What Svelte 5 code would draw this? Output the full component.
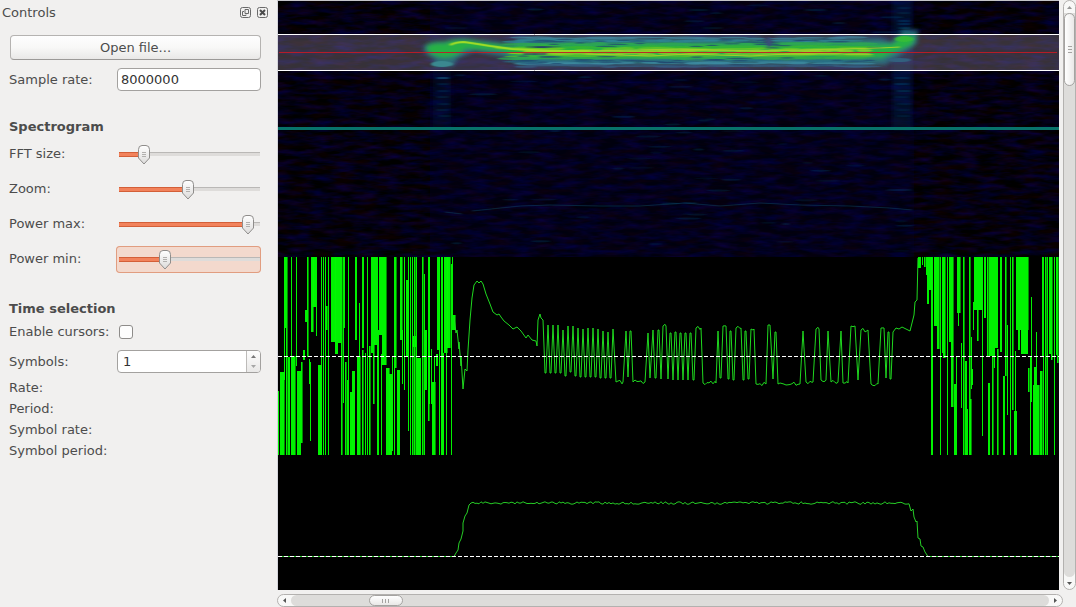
<script lang="ts">
  type Slider = { id: string; label: string; value: number; focused?: boolean };

  let sampleRate = $state('8000000');
  let symbols = $state(1);
  let cursors = $state(false);
  let sliders: Slider[] = $state([
    { id: 'fft', label: 'FFT size:', value: 15 },
    { id: 'zoom', label: 'Zoom:', value: 49 },
    { id: 'pmax', label: 'Power max:', value: 95 },
    { id: 'pmin', label: 'Power min:', value: 31, focused: true },
  ]);
  const readouts = ['Rate:', 'Period:', 'Symbol rate:', 'Symbol period:'];

  // small seeded generator, keeps the traces stable between renders
  function rng(seed: number) {
    return () => {
      seed = (seed * 1664525 + 1013904223) >>> 0;
      return seed / 4294967296;
    };
  }

  // clipped demodulator noise: x, width, top, bottom
  const TOP = 257, END = 455;
  const noise = [
    [278, 1, 391, END], [280, 4, 372, END], [284, 2, TOP, 328], [284, 1, 328, 380], [286, 1, TOP, END],
    [288, 2, 357, END], [291, 1, TOP, END], [292, 3, 356, END], [296, 1, TOP, 366], [297, 4, 371, END],
    [301, 1, 362, 443], [303, 2, 350, 360], [305, 2, 310, 322], [307, 1, TOP, 357], [309, 1, 359, 384],
    [310, 1, 362, 441], [311, 2, TOP, 332], [313, 4, TOP, 307], [316, 1, 300, 336], [318, 3, 365, END],
    [321, 1, TOP, END], [323, 1, TOP, END], [325, 2, 306, 330], [325, 1, TOP, END], [328, 1, TOP, END],
    [331, 4, TOP, 342], [335, 3, TOP, 354], [338, 3, TOP, 343], [341, 1, TOP, END], [343, 1, TOP, 403],
    [344, 1, TOP, 328], [345, 1, 362, END], [347, 2, 380, END], [348, 1, TOP, 407], [350, 2, 392, END],
    [352, 3, 371, END], [355, 2, TOP, 340], [357, 3, 356, END], [359, 1, 303, END], [362, 2, TOP, 348],
    [362, 1, 350, END], [365, 1, 353, END], [367, 1, TOP, END], [369, 1, 346, END], [371, 3, TOP, 353],
    [374, 3, TOP, 345], [373, 1, 340, 404], [377, 1, TOP, END], [379, 3, TOP, 335], [382, 4, TOP, 365],
    [378, 1, 330, END], [381, 1, 354, END], [386, 3, 368, END], [389, 3, 374, END], [392, 1, 357, 451],
    [394, 2, TOP, 368], [394, 1, TOP, END], [397, 3, 370, END], [400, 2, TOP, 340], [402, 1, 330, 384],
    [404, 1, TOP, 390], [406, 2, 280, 357], [408, 1, TOP, 431], [410, 1, TOP, END], [412, 1, 344, END],
    [413, 3, 336, 347], [412, 1, TOP, 344], [414, 1, TOP, END], [416, 1, TOP, END], [417, 4, 358, END],
    [422, 1, TOP, END], [424, 1, 274, END], [425, 2, 330, 390], [428, 1, TOP, 421], [429, 1, TOP, 404],
    [431, 1, 349, 404], [432, 3, 382, END], [434, 1, 357, END], [436, 2, 354, 366], [437, 2, TOP, 350],
    [439, 1, TOP, END], [441, 2, TOP, END], [444, 3, TOP, 353], [443, 1, 353, END], [446, 1, TOP, END],
    [447, 3, TOP, 348], [451, 1, 264, END], [452, 1, TOP, 330], [453, 2, 315, 330],
    [918, 3, TOP, 268], [922, 1, TOP, 265], [924, 1, TOP, 267], [926, 1, TOP, 275], [927, 2, TOP, 304],
    [929, 2, TOP, 290], [931, 2, TOP, END], [934, 3, TOP, 326], [937, 2, TOP, 349], [940, 1, TOP, END],
    [942, 2, TOP, 353], [943, 2, TOP, 358], [947, 1, TOP, END], [949, 2, TOP, 342], [951, 2, TOP, 407],
    [954, 3, 384, END], [956, 1, 356, 385], [957, 3, TOP, 313], [958, 1, 300, 326], [961, 1, 343, 408],
    [963, 1, TOP, END], [965, 2, 361, END], [966, 2, 409, END], [969, 1, TOP, END], [971, 1, 337, 389],
    [972, 1, 369, 385], [970, 1, 399, END], [973, 1, 302, 330], [974, 8, TOP, 310], [977, 1, 310, 341],
    [982, 1, TOP, 436], [984, 2, TOP, 318], [987, 1, TOP, 357], [988, 2, 383, END], [989, 6, TOP, 356],
    [992, 1, 357, END], [994, 1, 350, 368], [995, 3, TOP, 348], [997, 1, 349, END], [1000, 2, TOP, 352],
    [1003, 2, 376, END], [1005, 1, TOP, 376], [1007, 1, 325, 415], [1010, 1, TOP, END], [1012, 1, TOP, 410],
    [1014, 3, 411, END], [1015, 1, 351, END], [1016, 12, TOP, 330], [1018, 2, TOP, 350], [1021, 7, TOP, 354],
    [1028, 1, 368, 392], [1030, 1, 357, END], [1031, 1, 297, 402], [1033, 6, 385, END], [1034, 2, 367, 386],
    [1036, 1, 332, END], [1040, 2, 371, END], [1042, 2, TOP, 357], [1043, 1, TOP, END], [1045, 1, TOP, END],
    [1047, 1, TOP, END], [1049, 2, TOP, 354], [1051, 1, TOP, 360], [1054, 1, TOP, END], [1056, 1, TOP, 355],
    [1057, 1, TOP, 363],
  ];

  // symbol levels of the burst: from x, to x, y
  const levels = [
    [545, 546, 373], [548, 548, 325], [550, 551, 373], [553, 553, 325], [555, 556, 373], [558, 558, 325],
    [560, 561, 373], [563, 563, 330], [565, 566, 376], [568, 568, 326], [570, 571, 372], [573, 573, 326],
    [575, 576, 376], [578, 578, 328], [580, 581, 377], [583, 583, 329], [585, 586, 377], [588, 588, 328],
    [590, 591, 377], [593, 593, 328], [595, 596, 377], [598, 598, 329], [600, 601, 378], [603, 603, 331],
    [605, 606, 378], [608, 608, 332], [610, 611, 378], [613, 613, 329], [616, 623, 382], [626, 626, 331],
    [628, 628, 377], [630, 631, 331], [633, 645, 382], [648, 648, 333], [650, 650, 378], [653, 653, 330],
    [655, 656, 378], [658, 659, 330], [661, 661, 379], [663, 666, 326], [668, 668, 379], [670, 671, 333],
    [673, 673, 380], [675, 676, 332], [678, 678, 380], [680, 681, 333], [683, 683, 380], [685, 686, 333],
    [688, 688, 380], [690, 691, 333], [693, 694, 380], [696, 701, 328], [703, 716, 383], [718, 718, 331],
    [720, 721, 378], [723, 726, 326], [728, 729, 379], [730, 731, 331], [733, 734, 380], [736, 741, 328],
    [743, 744, 380], [745, 746, 331], [748, 749, 379], [751, 754, 329], [756, 766, 384], [768, 770, 325],
    [773, 773, 379], [775, 776, 332], [778, 800, 384], [803, 803, 331], [806, 813, 382], [816, 819, 329],
    [821, 826, 380], [828, 828, 331], [831, 838, 382], [841, 841, 331], [843, 848, 383], [851, 855, 326],
    [858, 858, 380], [861, 868, 330], [871, 878, 384], [881, 884, 328], [886, 886, 378], [888, 889, 332],
    [890, 891, 379],
  ];

  function burst() {
    const r = rng(9);
    let d = 'M454 317L456 333L457 330L459 349L459 342L461 366L461 356L463 389L465 369L467 371L468 350L470 320L472 298' +
      'L474 285L477 281L479 283L481 281L483 284L486 294L490 304L493 312L497 315L499 314L501 317L504 321L509 325' +
      'L513 329L517 327L521 331L526 338L528 335L532 340L536 341L537 346L538 320L540 314L541 318L543 320';
    for (const [a, b, y] of levels) {
      d += `L${a} ${y}`;
      for (let x = a + 2; x < b; x += 2) d += `L${x} ${(y + (r() - 0.5) * 4).toFixed(1)}`;
      if (b > a) d += `L${b} ${y}`;
    }
    return d + 'L893 332L896 328L899 329L902 327L906 329L910 331L911 327L914 315L915 302L917 300L918 258';
  }

  function envelope() {
    const r = rng(4);
    let d = 'M278 556.5H454L456 553L458 550L459 543L461 539L463 531L463 523L465 516L467 513L469 505L471 503';
    for (let x = 473; x < 910; x += 2) d += `L${x} ${(503 + (r() - 0.5) * 2.6).toFixed(1)}`;
    return d + 'L911 511L913 509L914 517L916 522L917 521L918 538L920 539L921 546L923 547L925 552L928 556.5H1059';
  }

  // horizontal energy streaks inside the tuned band
  const streaks = (() => {
    const r = rng(21);
    const out = [];
    const rows = [
      [38, '#40819a'], [41, '#2f8795'], [44, '#2daa50'], [47, '#36b632'], [49, '#6cc826'], [51, '#9ad428'],
      [54, '#92d028'], [56, '#50be2c'], [58, '#2fac4a'], [61, '#2a6f86'], [63, '#3c8aa0'], [66, '#345d83'],
    ] as [number, string][];
    for (const [y, color] of rows) {
      for (let x = 518 + r() * 14; x < 868; x += 8 + r() * 24) {
        out.push({ x, y: y + (r() - 0.5) * 1.6, rx: 8 + r() * 16, ry: 0.7 + r() * 0.9, color });
      }
    }
    for (let i = 0; i < 60; i++) {
      out.push({ x: 515 + r() * 360, y: i % 2 ? 39 + r() * 9 : 56 + r() * 9, rx: 4 + r() * 11, ry: 0.6, color: '#204a70' });
    }
    for (let i = 0; i < 8; i++) {
      out.push({ x: 518 + r() * 28, y: i % 2 ? 47 : 54, rx: 7, ry: 0.6, color: '#28406a' });
    }
    return out;
  })();

  // faint echoes above and below the band
  const echoes = (() => {
    const r = rng(77);
    const out = [];
    for (let i = 0; i < 75; i++) {
      out.push({ x: 435 + r() * 475, y: 4 + r() * 250, rx: 4 + r() * 10, o: 0.1 + r() * 0.2 });
    }
    for (const y of [78, 84, 91, 97, 104, 110, 116]) {
      out.push({ x: 442 + r() * 3, y, rx: 7, o: y < 80 ? 0.8 : 0.25 });
      out.push({ x: 901 + r() * 3, y, rx: 8, o: y < 92 ? 0.4 : 0.2 });
    }
    for (const y of [8, 13, 21, 24, 28, 31]) out.push({ x: 904, y, rx: 7, o: y > 20 ? 0.4 : 0.25 });
    return out;
  })();
</script>

<div class="app">
  <aside>
    <header>
      <span class="title">Controls</span>
      <button class="dock" aria-label="Float panel">
        <svg viewBox="0 0 11 11">
          <rect x=".5" y=".5" width="10" height="10" rx="2" />
          <path d="M5 2.500h3.500v4H5zM4 4.500H2.500v4H6V7.500" />
        </svg>
      </button>
      <button class="dock" aria-label="Close panel">
        <svg viewBox="0 0 11 11">
          <rect x=".5" y=".5" width="10" height="10" rx="2" />
          <path class="cross" d="M3 3l5 5M8 3l-5 5" />
        </svg>
      </button>
    </header>

    <form onsubmit={(e) => e.preventDefault()}>
      <button class="open" type="button">Open file...</button>
      <div class="row rate">
        <label for="rate">Sample rate:</label>
        <input id="rate" type="text" bind:value={sampleRate} />
      </div>

      <h2>Spectrogram</h2>
      <div class="sliders">
        {#each sliders as s (s.id)}
          <div class="row">
            <label for={s.id}>{s.label}</label>
            <div class="slider" class:focused={s.focused}>
              <input id={s.id} type="range" min="0" max="100" bind:value={s.value} style="--fill: {s.value}%" />
            </div>
          </div>
        {/each}
      </div>

      <h2>Time selection</h2>
      <div class="row check">
        <label for="cursors">Enable cursors:</label>
        <input id="cursors" type="checkbox" bind:checked={cursors} />
      </div>
      <div class="row symbols">
        <label for="symbols">Symbols:</label>
        <div class="spin">
          <input id="symbols" type="number" bind:value={symbols} />
          <div class="steps">
            <button type="button" aria-label="Increase" onclick={() => symbols++}>
              <svg viewBox="0 0 5 3"><path d="M0 3L2.500 0L5 3z" /></svg>
            </button>
            <button type="button" class="off" aria-label="Decrease" onclick={() => symbols--}>
              <svg viewBox="0 0 5 3"><path d="M0 0L2.500 3L5 0z" /></svg>
            </button>
          </div>
        </div>
      </div>
      <div class="readouts">
        {#each readouts as name}
          <span>{name}</span>
        {/each}
      </div>
    </form>
  </aside>

  <main>
    <svg class="plot" viewBox="278 1 781 589" preserveAspectRatio="none">
      <defs>
        <filter id="grain" x="0" y="0" width="100%" height="100%" color-interpolation-filters="sRGB">
          <feTurbulence type="fractalNoise" baseFrequency="0.045 0.2" numOctaves="3" seed="8" />
          <feColorMatrix values="0 .12 0 0 -.045  0 0 0 0 0  .42 0 0 0 -.145  0 0 0 0 1" />
        </filter>
        <filter id="soft" x="-20%" y="-40%" width="140%" height="180%"><feGaussianBlur stdDeviation="2" /></filter>
        <filter id="fine" x="-10%" y="-20%" width="120%" height="140%"><feGaussianBlur stdDeviation="1.4 .5" /></filter>
        <clipPath id="top"><rect x="278" y="1" width="781" height="256" /></clipPath>
      </defs>
      <rect x="278" y="1" width="781" height="589" />

      <g clip-path="url(#top)">
        <rect x="278" y="1" width="781" height="256" filter="url(#grain)" />
        <rect x="430" y="1" width="484" height="256" fill="#000048" opacity=".2" />
        <g filter="url(#soft)">
          <rect x="433" y="70" width="18" height="60" fill="#002860" opacity=".2" />
          <rect x="892" y="0" width="20" height="130" fill="#002860" opacity=".3" />
        </g>
        <g filter="url(#fine)" fill="#0c4a72">
          {#each echoes as e}
            <ellipse cx={e.x} cy={e.y} rx={e.rx} ry="1" opacity={e.o} />
          {/each}
        </g>
        <path class="echo" filter="url(#fine)" d="M445 212L462 214M472 211L520 206L550 205L600 206L640 206L685 203L720 206L760 203L800 205L850 206L890 208L912 210" />
        <rect x="278" y="35" width="781" height="35" fill="#c8b4d2" opacity=".27" />

        <g filter="url(#soft)">
          <path fill="#2c7a86" d="M423 47Q428 40 445 41Q460 36 478 40L512 44L520 38H762L769 46L776 38H880L892 42L903 30H918L917 44L908 50L896 58L885 65H520L508 58L475 51L458 58L453 66H432L436 60Q424 55 423 47z" opacity=".8" />
          <path fill="#28b244" d="M426 47Q432 42 444 43Q454 38 472 41L515 46L530 44H762L769 49L776 44H880L892 44L902 36H916L912 45L898 51L882 58H520L500 51L466 49Q454 60 439 57Q427 54 426 47z" />
        </g>
        <g filter="url(#fine)">
          {#each streaks as s}
            <ellipse cx={s.x} cy={s.y} rx={s.rx} ry={s.ry} fill={s.color} opacity=".75" />
          {/each}
          <path class="ridge" d="M450 45Q456 42 464 42Q478 44 490 46L512 49L550 51H590" />
          <path class="ridge faint" d="M590 51L680 49L760 51L880 48L900 47M586 54L650 56L690 54L750 56L790 54L870 54" />
          <ellipse cx="442" cy="64" rx="11" ry="3" fill="#3a8890" />
          <ellipse cx="899" cy="60" rx="12" ry="2" fill="#31617e" />
          <ellipse cx="904" cy="39" rx="9" ry="3" fill="#34bc38" />
          <ellipse cx="769" cy="42" rx="3" ry="5" fill="#374e78" />
        </g>
        <path class="center" d="M279 52.500H1057" />
        <path class="edge" d="M278 34.500H1059M278 70.500H1059" />
        <rect x="278" y="127" width="781" height="3" fill="#08736b" />
      </g>

      <g fill="#008a00" shape-rendering="crispEdges">
        {#each noise.filter((n, i) => i % 3 === 1) as [x, w, y1, y2]}
          <rect x={x + w} y={y1} width="1" height={y2 - y1} />
        {/each}
      </g>
      <g fill="#0f0" opacity=".95" shape-rendering="crispEdges">
        {#each noise as [x, w, y1, y2]}
          <rect {x} y={y1} width={w} height={y2 - y1} />
        {/each}
      </g>
      <path class="trace fm" d={burst()} />
      <path class="trace" d={envelope()} />
      <path class="dash" d="M278 356.500H1059M278 556.500H1059" />
    </svg>

    <div class="bar vertical">
      <button aria-label="Scroll up" class="off"><svg viewBox="0 0 5 3"><path d="M0 3L2.500 0L5 3z" /></svg></button>
      <div class="track"><div class="thumb"><i></i><i></i><i></i></div></div>
      <button aria-label="Scroll down"><svg viewBox="0 0 5 3"><path d="M0 0L2.500 3L5 0z" /></svg></button>
    </div>
    <div class="bar horizontal">
      <button aria-label="Scroll left"><svg viewBox="0 0 3 5"><path d="M3 0L0 2.500L3 5z" /></svg></button>
      <div class="track"><div class="thumb"><i></i><i></i><i></i></div></div>
      <button aria-label="Scroll right"><svg viewBox="0 0 3 5"><path d="M0 0L3 2.500L0 5z" /></svg></button>
    </div>
  </main>
</div>

<style>
  :global(body) { background: #f1f0ef; }
  .app {
    display: grid;
    grid-template-columns: 277px 1fr;
    height: 100vh;
    overflow: hidden;
    color: #4c4c4c;
    font: 13px/18px "DejaVu Sans", sans-serif;
  }
  input, button { font: inherit; color: inherit; margin: 0; padding: 0; box-sizing: border-box; }

  header { display: flex; align-items: center; gap: 6px; height: 25px; padding: 0 9px 0 2px; }
  .title { flex: 1; }
  .dock { width: 11px; height: 11px; border: 0; background: none; display: flex; }
  .dock svg { width: 11px; height: 11px; fill: none; stroke: #6a6a6a; }
  .dock .cross { stroke: #4a4a4a; stroke-width: 2; }

  form { padding: 10px 16px 0 9px; }
  .open {
    display: block;
    width: calc(100% - 1px);
    height: 25px;
    margin-left: 1px;
    border: 1px solid #b5b3b1;
    border-bottom-color: #9b9997;
    border-radius: 4px;
    background: linear-gradient(#fefefe, #f8f8f7 50%, #e9e8e7);
  }
  .row { display: grid; grid-template-columns: 107px 1fr; align-items: center; }
  .rate { margin-top: 8px; }
  .rate input, .spin {
    width: calc(100% - 1px);
    height: 23px;
    margin-left: 1px;
    border: 1px solid #a3a19f;
    border-radius: 4px;
    background: #fff;
    color: #333;
    box-sizing: border-box;
  }
  .rate input { padding: 0 3px; }
  h2 { margin: 27px 0 5px; font-size: 13px; line-height: 18px; }

  .sliders { display: grid; gap: 8px; }
  .sliders label { padding-bottom: 2px; }
  .slider { display: flex; height: 27px; padding: 0 1px 0 3px; box-sizing: border-box; border-radius: 4px; }
  .focused { background: #f3d9cd; box-shadow: inset 0 0 0 1px #e19d80; }
  input[type='range'] { appearance: none; width: 100%; height: 27px; background: none; outline: none; }
  input[type='range']::-webkit-slider-runnable-track {
    height: 20px;
    background:
      linear-gradient(#d35f38 0 1px, #f2825b 1px 4px, #d35f38 4px) 0 7px / var(--fill) 5px no-repeat,
      linear-gradient(#bab8b6 0 1px, #dedcda 1px 4px) 0 7px / 100% 4px no-repeat;
    border-radius: 2px;
  }
  input[type='range']::-webkit-slider-thumb {
    appearance: none;
    width: 12px;
    height: 20px;
    background: url("data:image/svg+xml,%3Csvg xmlns='http://www.w3.org/2000/svg' viewBox='0 0 12 20'%3E%3Cdefs%3E%3ClinearGradient id='g' x2='0' y2='1'%3E%3Cstop stop-color='%23fff'/%3E%3Cstop offset='1' stop-color='%23dcdbda'/%3E%3C/linearGradient%3E%3C/defs%3E%3Cpath d='M.5 4.500Q.5.5 4 .5h4q3.500 0 3.500 4V13L6 19L.5 13z' fill='url(%23g)' stroke='%238f8d8b'/%3E%3Cpath d='M4 7.500h4M4 9.500h4M4 11.500h4' stroke='%23b2b0ae'/%3E%3C/svg%3E") no-repeat;
  }

  .check input {
    appearance: none;
    width: 14px;
    height: 14px;
    margin-left: 3px;
    border: 1px solid #8e8c8a;
    border-radius: 3px;
    background: #fdfdfd;
  }
  .check input:checked { background: #e9683f; }
  .symbols { margin-top: 9px; }
  .spin { display: flex; overflow: hidden; }
  .spin input { flex: 1; min-width: 0; border: 0; padding: 0 5px; background: none; outline: none; appearance: textfield; }
  .spin input::-webkit-inner-spin-button { appearance: none; }
  .steps {
    display: grid;
    width: 13px;
    border-left: 1px solid #bdbbb9;
    background: linear-gradient(#fdfdfd, #e9e8e7);
  }
  .steps button, .bar button { display: flex; align-items: center; justify-content: center; border: 0; background: none; }
  .steps svg { width: 5px; height: 3px; fill: #777; }
  .off { opacity: .6; }
  .readouts { display: grid; margin-top: 4px; line-height: 21px; }

  main {
    display: grid;
    grid-template: minmax(0, 1fr) 13px / minmax(0, 1fr) 13px;
    gap: 4px;
    min-height: 0;
  }
  .plot {
    display: block;
    width: 100%;
    height: 100%;
    box-sizing: border-box;
    border-top: 1px solid #c4c4c8;
    border-left: 1px solid #d5d5dc;
  }
  .trace { fill: none; stroke: #26cc26; stroke-width: 1; }
  .fm { stroke: #1fd81f; stroke-linejoin: round; }
  .dash { stroke: #fff; stroke-dasharray: 4 2; }
  .edge { stroke: #fff; }
  .center { stroke: #c41a26; opacity: .9; }
  .ridge { fill: none; stroke: #9fdc28; stroke-width: 2; }
  .faint { stroke: #a2cf2c; stroke-width: 1; }
  .echo { fill: none; stroke: #0d4a68; opacity: .5; }

  .bar {
    display: flex;
    box-sizing: border-box;
    border: 1px solid #b3b1af;
    border-radius: 7px;
    background: #f8f8f7;
    overflow: hidden;
  }
  .bar svg { fill: #555; }
  .track { flex: 1; background: #dddcda; }
  .thumb {
    display: flex;
    align-items: center;
    justify-content: center;
    gap: 2px;
    box-sizing: border-box;
    border: 1px solid #a5a3a1;
    border-radius: 6px;
  }
  .thumb i { background: #a5a3a1; }
  .vertical { flex-direction: column; }
  .vertical button { height: 12px; width: 100%; }
  .vertical svg { width: 5px; height: 3px; }
  .vertical .track { border-radius: 0 0 6px 6px; }
  .vertical .thumb { flex-direction: column; height: 13%; background: linear-gradient(90deg, #fff, #e9e8e7); }
  .vertical i { width: 4px; height: 1px; }
  .horizontal { grid-row: 2; margin-right: -4px; }
  .horizontal button { width: 13px; height: 100%; }
  .horizontal svg { width: 3px; height: 5px; }
  .horizontal .track { border-radius: 6px; padding-left: 2px; }
  .horizontal .thumb { width: 34px; height: 100%; margin-left: 10%; background: linear-gradient(#fff, #e9e8e7); }
  .horizontal i { width: 1px; height: 4px; }
</style>
